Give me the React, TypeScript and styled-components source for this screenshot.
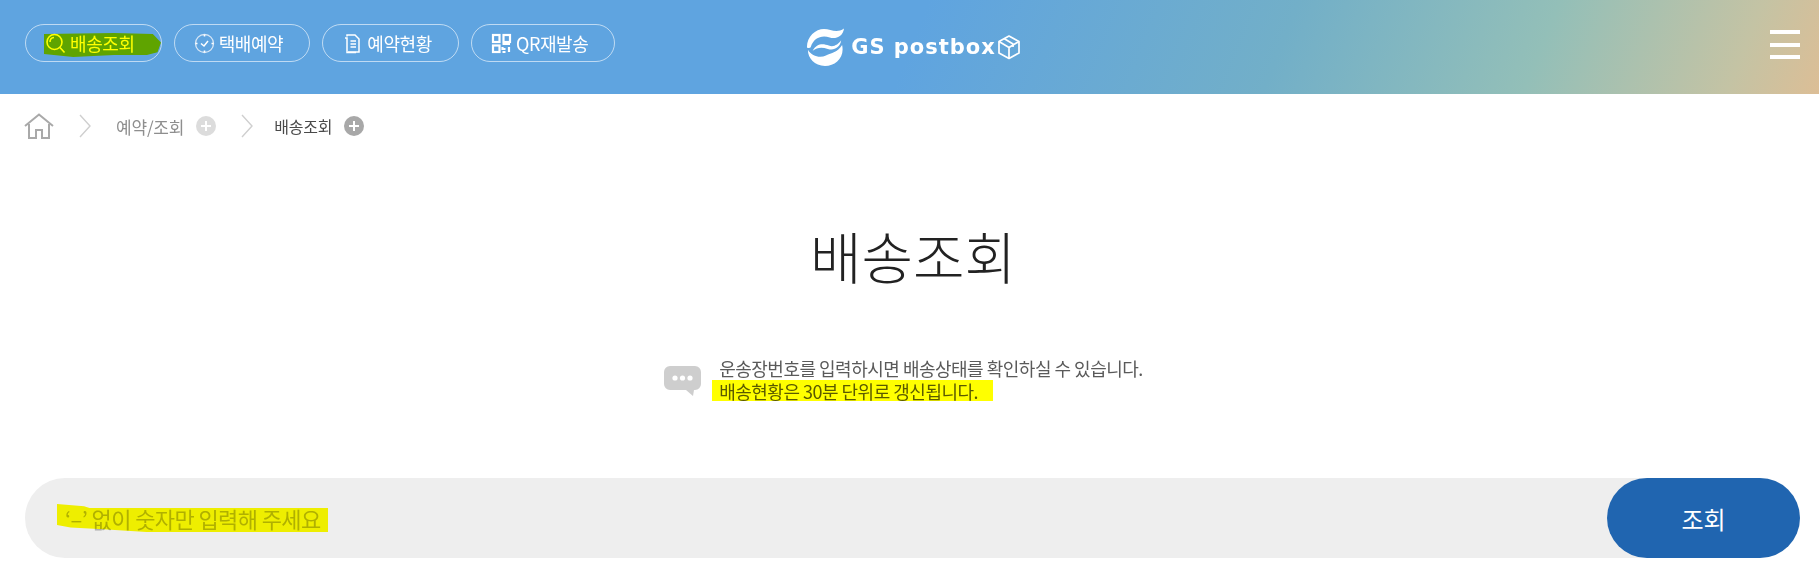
import React from "react";
import styled, { createGlobalStyle } from "styled-components";

const FONT = `"Noto Sans CJK KR", "Noto Sans", sans-serif`;

const Global = createGlobalStyle`
  html, body { margin: 0; padding: 0; background: #fff; }
  body { font-family: ${FONT}; overflow: hidden; }
  * { box-sizing: border-box; }
`;

const Page = styled.div`
  width: 1819px;
  height: 584px;
  display: flex;
  flex-direction: column;
`;

const Header = styled.header`
  height: 94px;
  padding: 24px 19px 0 25px;
  display: grid;
  grid-template-columns: 1fr auto 1fr;
  align-items: start;
  background: linear-gradient(112deg, #5fa4e0 0%, #5fa4e0 50%, #72afc8 70%, #93bfb8 84%, #c4c3a4 95%, #dcbe96 100%);
`;

const Nav = styled.nav`
  display: flex;
  gap: 12px;
`;

const Pill = styled.a`
  position: relative;
  height: 38px;
  padding: 0 26px 0 19px;
  display: flex;
  align-items: center;
  gap: 4px;
  border: 1px solid rgba(255, 255, 255, 0.6);
  border-radius: 19px;
  color: #fff;
  font-size: 18px;
  letter-spacing: -0.4px;
  white-space: nowrap;
`;

const PillIcon = styled.svg`
  width: 21px;
  height: 21px;
  flex: none;
  fill: none;
  stroke: #fff;
`;

const Marker = styled.span`
  position: absolute;
  background: #ffff00;
  mix-blend-mode: multiply;
  pointer-events: none;
`;

const NavMarker = styled(Marker)`
  left: 18px;
  top: 8px;
  width: 117px;
  height: 24px;
  clip-path: polygon(0 4%, 60% 0, 93% 4%, 100% 40%, 97% 80%, 88% 92%, 60% 92%, 25% 100%, 0 88%);
`;

const Logo = styled.div`
  display: flex;
  align-items: center;
  margin-top: 3px;
  height: 40px;
  color: #fff;
  transform: translateX(1px);
`;

const LogoMark = styled.svg`
  width: 38px;
  height: 38px;
  fill: #fff;
  margin-right: 7px;
`;

const LogoText = styled.span`
  font-family: "DejaVu Sans", sans-serif;
  font-size: 21px;
  font-weight: 700;
  letter-spacing: 1px;
  white-space: nowrap;
`;

const LogoBox = styled.svg`
  width: 24px;
  height: 26px;
  margin-left: 1px;
  fill: none;
  stroke: #fff;
  stroke-width: 1.7;
  stroke-linejoin: round;
`;

const Burger = styled.button`
  justify-self: end;
  width: 30px;
  margin-top: 6px;
  padding: 0;
  border: 0;
  background: none;
  display: flex;
  flex-direction: column;
  gap: 8.5px;
`;

const BurgerBar = styled.i`
  display: block;
  height: 4px;
  background: #fff;
`;

const Crumbs = styled.div`
  height: 64px;
  padding: 0 24px;
  display: flex;
  align-items: center;
`;

const HomeIcon = styled.svg`
  width: 30px;
  height: 26px;
  fill: none;
  stroke: #a9a9a9;
  stroke-width: 2;
`;

const Chevron = styled.svg<{ $tight?: boolean }>`
  width: 12px;
  height: 24px;
  margin: 0 ${(p) => (p.$tight ? "21px" : "25px")} 0 25px;
  fill: none;
  stroke: #cfcfcf;
  stroke-width: 1.4;
`;

const CrumbText = styled.span<{ $current?: boolean }>`
  font-size: ${(p) => (p.$current ? "16px" : "17px")};
  letter-spacing: -0.2px;
  color: ${(p) => (p.$current ? "#4a4a4a" : "#8e8e8e")};
`;

const PlusDot = styled.span<{ $dark?: boolean }>`
  position: relative;
  width: 20px;
  height: 20px;
  margin-left: 12px;
  border-radius: 50%;
  background: ${(p) => (p.$dark ? "#a8a8a8" : "#dcdcdc")};
  &::before, &::after {
    content: "";
    position: absolute;
    background: #fff;
    left: 5px;
    top: 9px;
    width: 10px;
    height: 2px;
  }
  &::after {
    transform: rotate(90deg);
  }
`;

const Title = styled.h1`
  margin: 62px 0 0;
  padding-left: 7px;
  text-align: center;
  font-size: 56px;
  line-height: 70px;
  font-weight: 300;
  color: #222;
`;

const Notice = styled.div`
  margin-top: 67px;
  padding-right: 12px;
  display: flex;
  justify-content: center;
  align-items: center;
  gap: 18px;
`;

const Bubble = styled.svg`
  width: 37px;
  height: 30px;
  margin-top: 2px;
  fill: #cecece;
`;

const NoticeLines = styled.div`
  font-size: 18px;
  line-height: 23px;
  letter-spacing: -0.5px;
  color: #5a5a5a;
`;

const NoticeLine = styled.div`
  position: relative;
  white-space: nowrap;
`;

const NoticeMarker = styled(Marker)`
  left: -7px;
  top: 0;
  width: 281px;
  height: 21px;
`;

const Search = styled.form`
  position: relative;
  margin: 75px 19px 0 25px;
  height: 80px;
  display: flex;
  border-radius: 40px;
  background: #eeeeee;
`;

const SearchInput = styled.input`
  flex: 1;
  min-width: 0;
  padding: 0 0 0 40px;
  border: 0;
  outline: 0;
  background: transparent;
  font-family: ${FONT};
  font-size: 22px;
  letter-spacing: -0.6px;
  &::placeholder {
    color: #b0b0b0;
    opacity: 1;
  }
`;

const SearchMarker = styled(Marker)`
  left: 32px;
  top: 26px;
  width: 271px;
  height: 28px;
  clip-path: polygon(0 0, 10% 8%, 12% 14%, 100% 14%, 100% 100%, 33% 100%, 17% 90%, 5% 84%, 0 75%);
`;

const SearchButton = styled.button`
  width: 193px;
  height: 80px;
  border: 0;
  border-radius: 40px;
  background: #2065b0;
  color: #fff;
  font-family: ${FONT};
  font-size: 24px;
`;

export default function App() {
  return (
    <Page>
      <Global />
      <Header>
        <Nav>
          <Pill>
            <PillIcon viewBox="0 0 21 21" strokeWidth={1.6}>
              <circle cx="9.500" cy="9" r="7.500" />
              <path d="M5 9a4.500 4.500 0 0 1 4-4.500M15 14.500l4.500 5" />
            </PillIcon>
            배송조회
            <NavMarker />
          </Pill>
          <Pill>
            <PillIcon viewBox="0 0 21 21" strokeWidth={1.3}>
              <circle cx="10.500" cy="10.500" r="9" stroke="#d7e6f5" />
              <path d="M10.500 1.500v2M10.500 17.500v2M1.500 10.500h2M17.500 10.500h2" strokeWidth={1.6} />
              <path d="M7 10.500l3 2.500 4-5" strokeWidth={1.5} />
            </PillIcon>
            택배예약
          </Pill>
          <Pill>
            <PillIcon viewBox="0 0 21 21" strokeWidth={1.5}>
              <path d="M5 3.500V2h8l4 4v13H6" />
              <path d="M3 5h2v14.500h9" />
              <path d="M8.500 8h5.500M8.500 11h5.500M8.500 14h5.500" strokeWidth={1.3} />
            </PillIcon>
            예약현황
          </Pill>
          <Pill>
            <PillIcon viewBox="0 0 21 21" strokeWidth={2.2}>
              <rect x="2" y="2" width="6.500" height="7" />
              <rect x="12.500" y="2" width="6.500" height="7" />
              <rect x="2" y="12.500" width="6.500" height="6.500" />
              <path d="M11.500 11h7.500M11.500 14v2h3M18 14v5M11.500 19h3" />
            </PillIcon>
            QR재발송
          </Pill>
        </Nav>
        <Logo>
          <LogoMark viewBox="0 0 40 40">
            <path d="M1 20C1 9 10 1 19 1c7 0 13 5 21-0.500C39 9 31 12 25 10 17 7 8 10 5 20c-.3 1-4 2-4 0z" />
            <path d="M7 24c4-8 11-8 17-5.500 5 2 10-1 13-5.500-1 8-8 11-14 9-6-2-11-2-16 2z" />
            <path d="M2 23c4 7 13 9 19 6 6-3 12-3 17-11 3 13-7 22-18 22C9 40 2 32 2 23z" />
          </LogoMark>
          <LogoText>GS postbox</LogoText>
          <LogoBox viewBox="0 0 24 26">
            <path d="M12 2l10 5.500v11.500l-10 5.500L2 19V7.500z" />
            <path d="M2 7.500l10 6 10-6M12 13.500v11" />
            <path d="M7 4.500l9 5.500v3" />
          </LogoBox>
        </Logo>
        <Burger aria-label="menu">
          <BurgerBar />
          <BurgerBar />
          <BurgerBar />
        </Burger>
      </Header>

      <Crumbs>
        <HomeIcon viewBox="0 0 30 26">
          <path d="M1 13L15 1.500 29 13" />
          <path d="M5 11v14h7v-8h6v8h7V11" />
        </HomeIcon>
        <Chevron viewBox="0 0 12 24">
          <path d="M1 1l10 11L1 23" />
        </Chevron>
        <CrumbText>예약/조회</CrumbText>
        <PlusDot />
        <Chevron viewBox="0 0 12 24" $tight>
          <path d="M1 1l10 11L1 23" />
        </Chevron>
        <CrumbText $current>배송조회</CrumbText>
        <PlusDot $dark />
      </Crumbs>

      <Title>배송조회</Title>

      <Notice>
        <Bubble viewBox="0 0 37 30">
          <path d="M6 0h25a6 6 0 0 1 6 6v12a6 6 0 0 1-6 6h-1l-1 6-7-6H6a6 6 0 0 1-6-6V6a6 6 0 0 1 6-6z" />
          <circle cx="11" cy="12" r="2.600" fill="#fff" />
          <circle cx="18.500" cy="12" r="2.600" fill="#fff" />
          <circle cx="26" cy="12" r="2.600" fill="#fff" />
        </Bubble>
        <NoticeLines>
          <NoticeLine>운송장번호를 입력하시면 배송상태를 확인하실 수 있습니다.</NoticeLine>
          <NoticeLine>
            배송현황은 30분 단위로 갱신됩니다.
            <NoticeMarker />
          </NoticeLine>
        </NoticeLines>
      </Notice>

      <Search>
        <SearchInput placeholder="‘–’ 없이 숫자만 입력해 주세요" />
        <SearchButton type="button">조회</SearchButton>
        <SearchMarker />
      </Search>
    </Page>
  );
}
